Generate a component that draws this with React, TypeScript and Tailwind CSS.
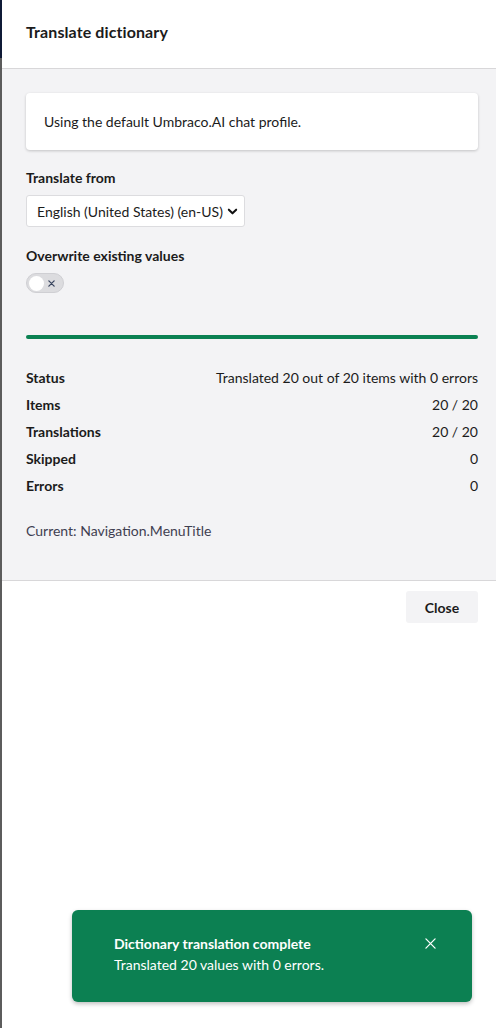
import React from "react";

const rows: [string, string][] = [
  ["Status", "Translated 20 out of 20 items with 0 errors"],
  ["Items", "20 / 20"],
  ["Translations", "20 / 20"],
  ["Skipped", "0"],
  ["Errors", "0"],
];

export default function App() {
  return (
    <div
      className="flex w-[496px] h-[1028px] overflow-hidden text-[#1b1b1b] relative"
      style={{ fontFamily: "Lato, 'Open Sans', sans-serif" }}
    >
      <div className="w-[2px] flex flex-col shrink-0">
        <div className="h-[58px] bg-[#0f1a36]" />
        <div className="flex-1 bg-[#5c5c5c]" />
      </div>
      <div className="flex-1 flex flex-col bg-white">
        <div className="h-[69px] border-b border-[#d8d7d9] flex items-center pl-6 pr-[18px]">
          <h1 className="text-[16px] font-bold leading-5 mt-[-5px] tracking-[0.1px]">Translate dictionary</h1>
        </div>
        <div className="bg-[#f3f3f5] pl-6 pr-[18px] pt-6 pb-[39px] border-b border-[#d8d7d9]">
          <div className="bg-white rounded-[4px] h-[57px] flex items-center px-[18px] shadow-[0_1px_3px_rgba(0,0,0,0.2)] text-[14px]">
            Using the default Umbraco.AI chat profile.
          </div>
          <div className="mt-[18px] text-[14px] font-bold leading-5">Translate from</div>
          <div className="mt-[7px] w-[219px] h-[32px] bg-white border border-[#dcdcdf] rounded-[3px] flex items-center justify-between pl-[10px] pr-[6px] text-[14px]">
            <span>English (United States) (en-US)</span>
            <svg width="11" height="11" viewBox="0 0 12 12" fill="none">
              <path d="M2 4l4 4 4-4" stroke="#111" strokeWidth="2.2" strokeLinecap="round" strokeLinejoin="round" />
            </svg>
          </div>
          <div className="mt-[19px] text-[14px] font-bold leading-5">Overwrite existing values</div>
          <div className="mt-[7px] w-[38px] h-[20px] rounded-full bg-[#dcdcdf] border border-[#cfcfd3] flex items-center justify-between pl-[2px] pr-[8px]">
            <div className="w-[15px] h-[15px] rounded-full bg-white" />
            <svg width="7" height="7" viewBox="0 0 8 8">
              <path d="M1 1l6 6M7 1l-6 6" stroke="#3b4660" strokeWidth="1.5" strokeLinecap="round" />
            </svg>
          </div>
          <div className="mt-[42px] h-[4px] rounded-full bg-[#0b8152]" />
          <div className="mt-[29px] flex flex-col gap-[7px]">
            {rows.map(([k, v]) => (
              <div key={k} className="flex justify-between text-[14px] leading-5">
                <span className="font-bold">{k}</span>
                <span>{v}</span>
              </div>
            ))}
          </div>
          <div className="mt-[25px] text-[14px] leading-5 text-[#3f4051]">Current: Navigation.MenuTitle</div>
        </div>
        <div className="flex justify-end pl-6 pr-[18px] pt-[10px]">
          <button className="w-[72px] h-[32px] rounded-[3px] bg-[#f3f3f5] text-[14px] font-bold text-[#1b1b1b]">
            Close
          </button>
        </div>
      </div>
      <div className="absolute left-[72px] top-[910px] w-[400px] h-[92px] rounded-[6px] bg-[#0c8052] shadow-[0_2px_4px_rgba(0,0,0,0.25)] text-white flex items-start pl-[42px] pr-[36px] pt-[23px]">
        <div className="flex-1 text-[14px] leading-[21px]">
          <div className="font-bold">Dictionary translation complete</div>
          <div>Translated 20 values with 0 errors.</div>
        </div>
        <svg width="11" height="11" viewBox="0 0 12 12" className="mt-[5px]">
          <path d="M1 1l10 10M11 1L1 11" stroke="white" strokeWidth="1.4" strokeLinecap="round" />
        </svg>
      </div>
    </div>
  );
}
